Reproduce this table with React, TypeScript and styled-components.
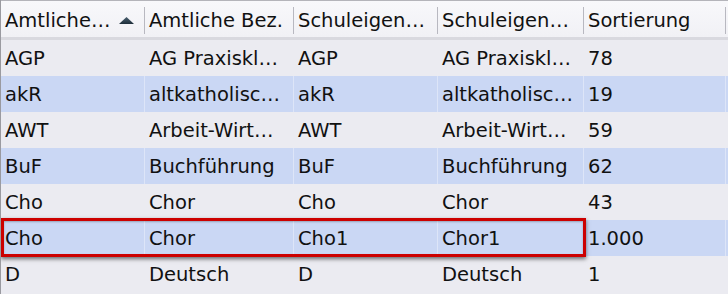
import React from "react";
import styled, { createGlobalStyle } from "styled-components";

const Global = createGlobalStyle`
  html, body { margin: 0; padding: 0; background: #ebebf1; }
  body { font-family: "DejaVu Sans", "Liberation Sans", sans-serif; }
`;

const COLS = "144px 149px 144px 146px 142px 1fr";

const Table = styled.div`
  position: relative;
  width: 728px;
  height: 294px;
  overflow: hidden;
  background: #ebebf1;
  border-left: 1px solid #9a9aa0;
  box-sizing: border-box;
`;

const HeaderRow = styled.div`
  display: grid;
  grid-template-columns: ${COLS};
  height: 40px;
  box-sizing: border-box;
  background: linear-gradient(#f8f8fb, #f1f1f5);
  border-top: 1px solid #b4b4ba;
  border-bottom: 3px solid #d9d9df;
`;

const HeaderCell = styled.div`
  position: relative;
  display: flex;
  align-items: center;
  padding: 2px 0 0 4px;
  font-size: 19.5px;
  color: #111;
  white-space: nowrap;
  overflow: hidden;
  &::after {
    content: "";
    position: absolute;
    right: 0;
    top: 6px;
    bottom: 3px;
    width: 1px;
    background: #b8b8c0;
  }
`;

const SortArrow = styled.svg`
  margin-left: 9px;
  flex: none;
`;

const Row = styled.div<{ $alt: boolean }>`
  display: grid;
  grid-template-columns: ${COLS};
  height: 36px;
  background: ${(p) => (p.$alt ? "#cad7f4" : "#ebebf1")};
`;

const Cell = styled.div<{ $alt: boolean }>`
  display: flex;
  align-items: center;
  padding: 0 0 0 4px;
  font-size: 19.5px;
  color: #111;
  white-space: nowrap;
  overflow: hidden;
  border-right: 1px solid ${(p) => (p.$alt ? "#dde5f8" : "#ebebf1")};
`;

const Highlight = styled.div`
  position: absolute;
  left: 0;
  top: 218px;
  width: 585px;
  height: 39px;
  box-sizing: border-box;
  border: 3px solid #cc0000;
  box-shadow: 0 2px 4px rgba(0, 0, 0, 0.55), inset 0 1px 2px rgba(0, 0, 0, 0.25);
  pointer-events: none;
`;

const headers = ["Amtliche…", "Amtliche Bez.", "Schuleigen…", "Schuleigen…", "Sortierung", ""];

const rows: string[][] = [
  ["AGP", "AG Praxiskl…", "AGP", "AG Praxiskl…", "78", ""],
  ["akR", "altkatholisc…", "akR", "altkatholisc…", "19", ""],
  ["AWT", "Arbeit-Wirt…", "AWT", "Arbeit-Wirt…", "59", ""],
  ["BuF", "Buchführung", "BuF", "Buchführung", "62", ""],
  ["Cho", "Chor", "Cho", "Chor", "43", ""],
  ["Cho", "Chor", "Cho1", "Chor1", "1.000", ""],
  ["D", "Deutsch", "D", "Deutsch", "1", ""],
];

export default function App() {
  return (
    <>
      <Global />
      <Table>
        <HeaderRow>
          {headers.map((h, i) => (
            <HeaderCell key={i}>
              {h}
              {i === 0 && (
                <SortArrow width="15" height="7" viewBox="0 0 15 7">
                  <defs>
                    <linearGradient id="ag" x1="0" y1="0" x2="0" y2="1">
                      <stop offset="0" stopColor="#4a6070" />
                      <stop offset="1" stopColor="#1e2e3a" />
                    </linearGradient>
                  </defs>
                  <polygon points="7.5,0 15,7 0,7" fill="url(#ag)" />
                </SortArrow>
              )}
            </HeaderCell>
          ))}
        </HeaderRow>
        {rows.map((r, i) => (
          <Row key={i} $alt={i % 2 === 1}>
            {r.map((c, j) => (
              <Cell key={j} $alt={i % 2 === 1}>
                {c}
              </Cell>
            ))}
          </Row>
        ))}
        <Highlight />
      </Table>
    </>
  );
}
